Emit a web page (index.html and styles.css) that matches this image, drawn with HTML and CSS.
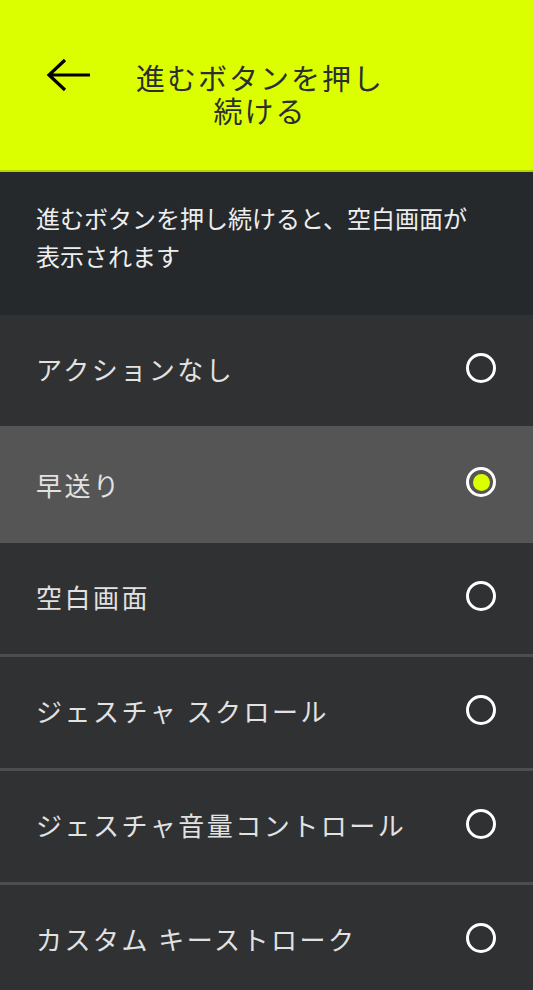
FILE: index.html
```html
<!DOCTYPE html>
<html lang="ja">
<head>
  <meta charset="UTF-8" />
  <title>進むボタンを押し続ける</title>
  <link rel="stylesheet" href="styles.css">
</head>
<body>

  <header class="topbar">
    <button class="back" type="button" aria-label="戻る">
      <svg width="46" height="36" viewBox="0 0 46 36">
        <path d="M19 3 L3 18 L19 33 M3 18 H44" fill="none" stroke="#000" stroke-width="3.2" stroke-linejoin="miter" />
      </svg>
    </button>
    <h1 class="title">進むボタンを押し続ける</h1>
  </header>

  <div class="desc">進むボタンを押し続けると、空白画面が表示されます</div>

  <ul class="options">
    <li class="row"><span class="label">アクションなし</span><span class="radio"></span></li>
    <li class="row selected"><span class="label">早送り</span><span class="radio on"></span></li>
    <li class="row"><span class="label">空白画面</span><span class="radio"></span></li>
    <li class="row divided"><span class="label">ジェスチャ スクロール</span><span class="radio"></span></li>
    <li class="row divided"><span class="label">ジェスチャ音量コントロール</span><span class="radio"></span></li>
    <li class="row divided"><span class="label">カスタム キーストローク</span><span class="radio"></span></li>
  </ul>

</body>
</html>
```

FILE: styles.css
```css
body {
  margin: 0;
  font-family: "Noto Sans CJK JP", "Noto Sans", sans-serif;
  background-color: #303133;
  overflow: hidden;
}

.topbar {
  background-color: #dcff00;
  height: 172px;
  border-bottom: 2px solid #b8d200;
  display: flex;
  align-items: flex-start;
  padding: 57px 0 0 46px;
  box-sizing: border-box;
}

.back {
  background: none;
  border: none;
  padding: 0;
  margin: 0;
  width: 46px;
  height: 36px;
  cursor: pointer;
}

.back svg {
  display: block;
}

.title {
  margin: 4px 0 0 36px;
  width: 264px;
  text-align: center;
  font-size: 29px;
  font-weight: 400;
  line-height: 33px;
  letter-spacing: 2px;
  color: #2c2f32;
}

.desc {
  background-color: #25292c;
  color: #eeeeee;
  font-size: 24px;
  line-height: 38px;
  padding: 27px 55px 40px 36px;
}

.options {
  list-style: none;
  margin: 0;
  padding: 0;
}

.row {
  height: 111px;
  display: flex;
  align-items: center;
  justify-content: space-between;
  padding: 0 37px 5px 36px;
  box-sizing: border-box;
  color: #e2e2e2;
  font-size: 26px;
  letter-spacing: 2.5px;
}

.row.selected {
  height: 117px;
  padding-bottom: 0;
  background-color: #555555;
}

.row.selected .radio {
  margin-top: -5px;
}

.row.divided {
  height: 114px;
  border-top: 3px solid #4c4d4f;
}

.radio {
  width: 24px;
  height: 24px;
  border: 3px solid #ffffff;
  border-radius: 50%;
  flex-shrink: 0;
  position: relative;
}

.radio.on::after {
  content: "";
  position: absolute;
  top: 3.5px;
  left: 3.5px;
  width: 17px;
  height: 17px;
  border-radius: 50%;
  background-color: #dcff00;
}
```
